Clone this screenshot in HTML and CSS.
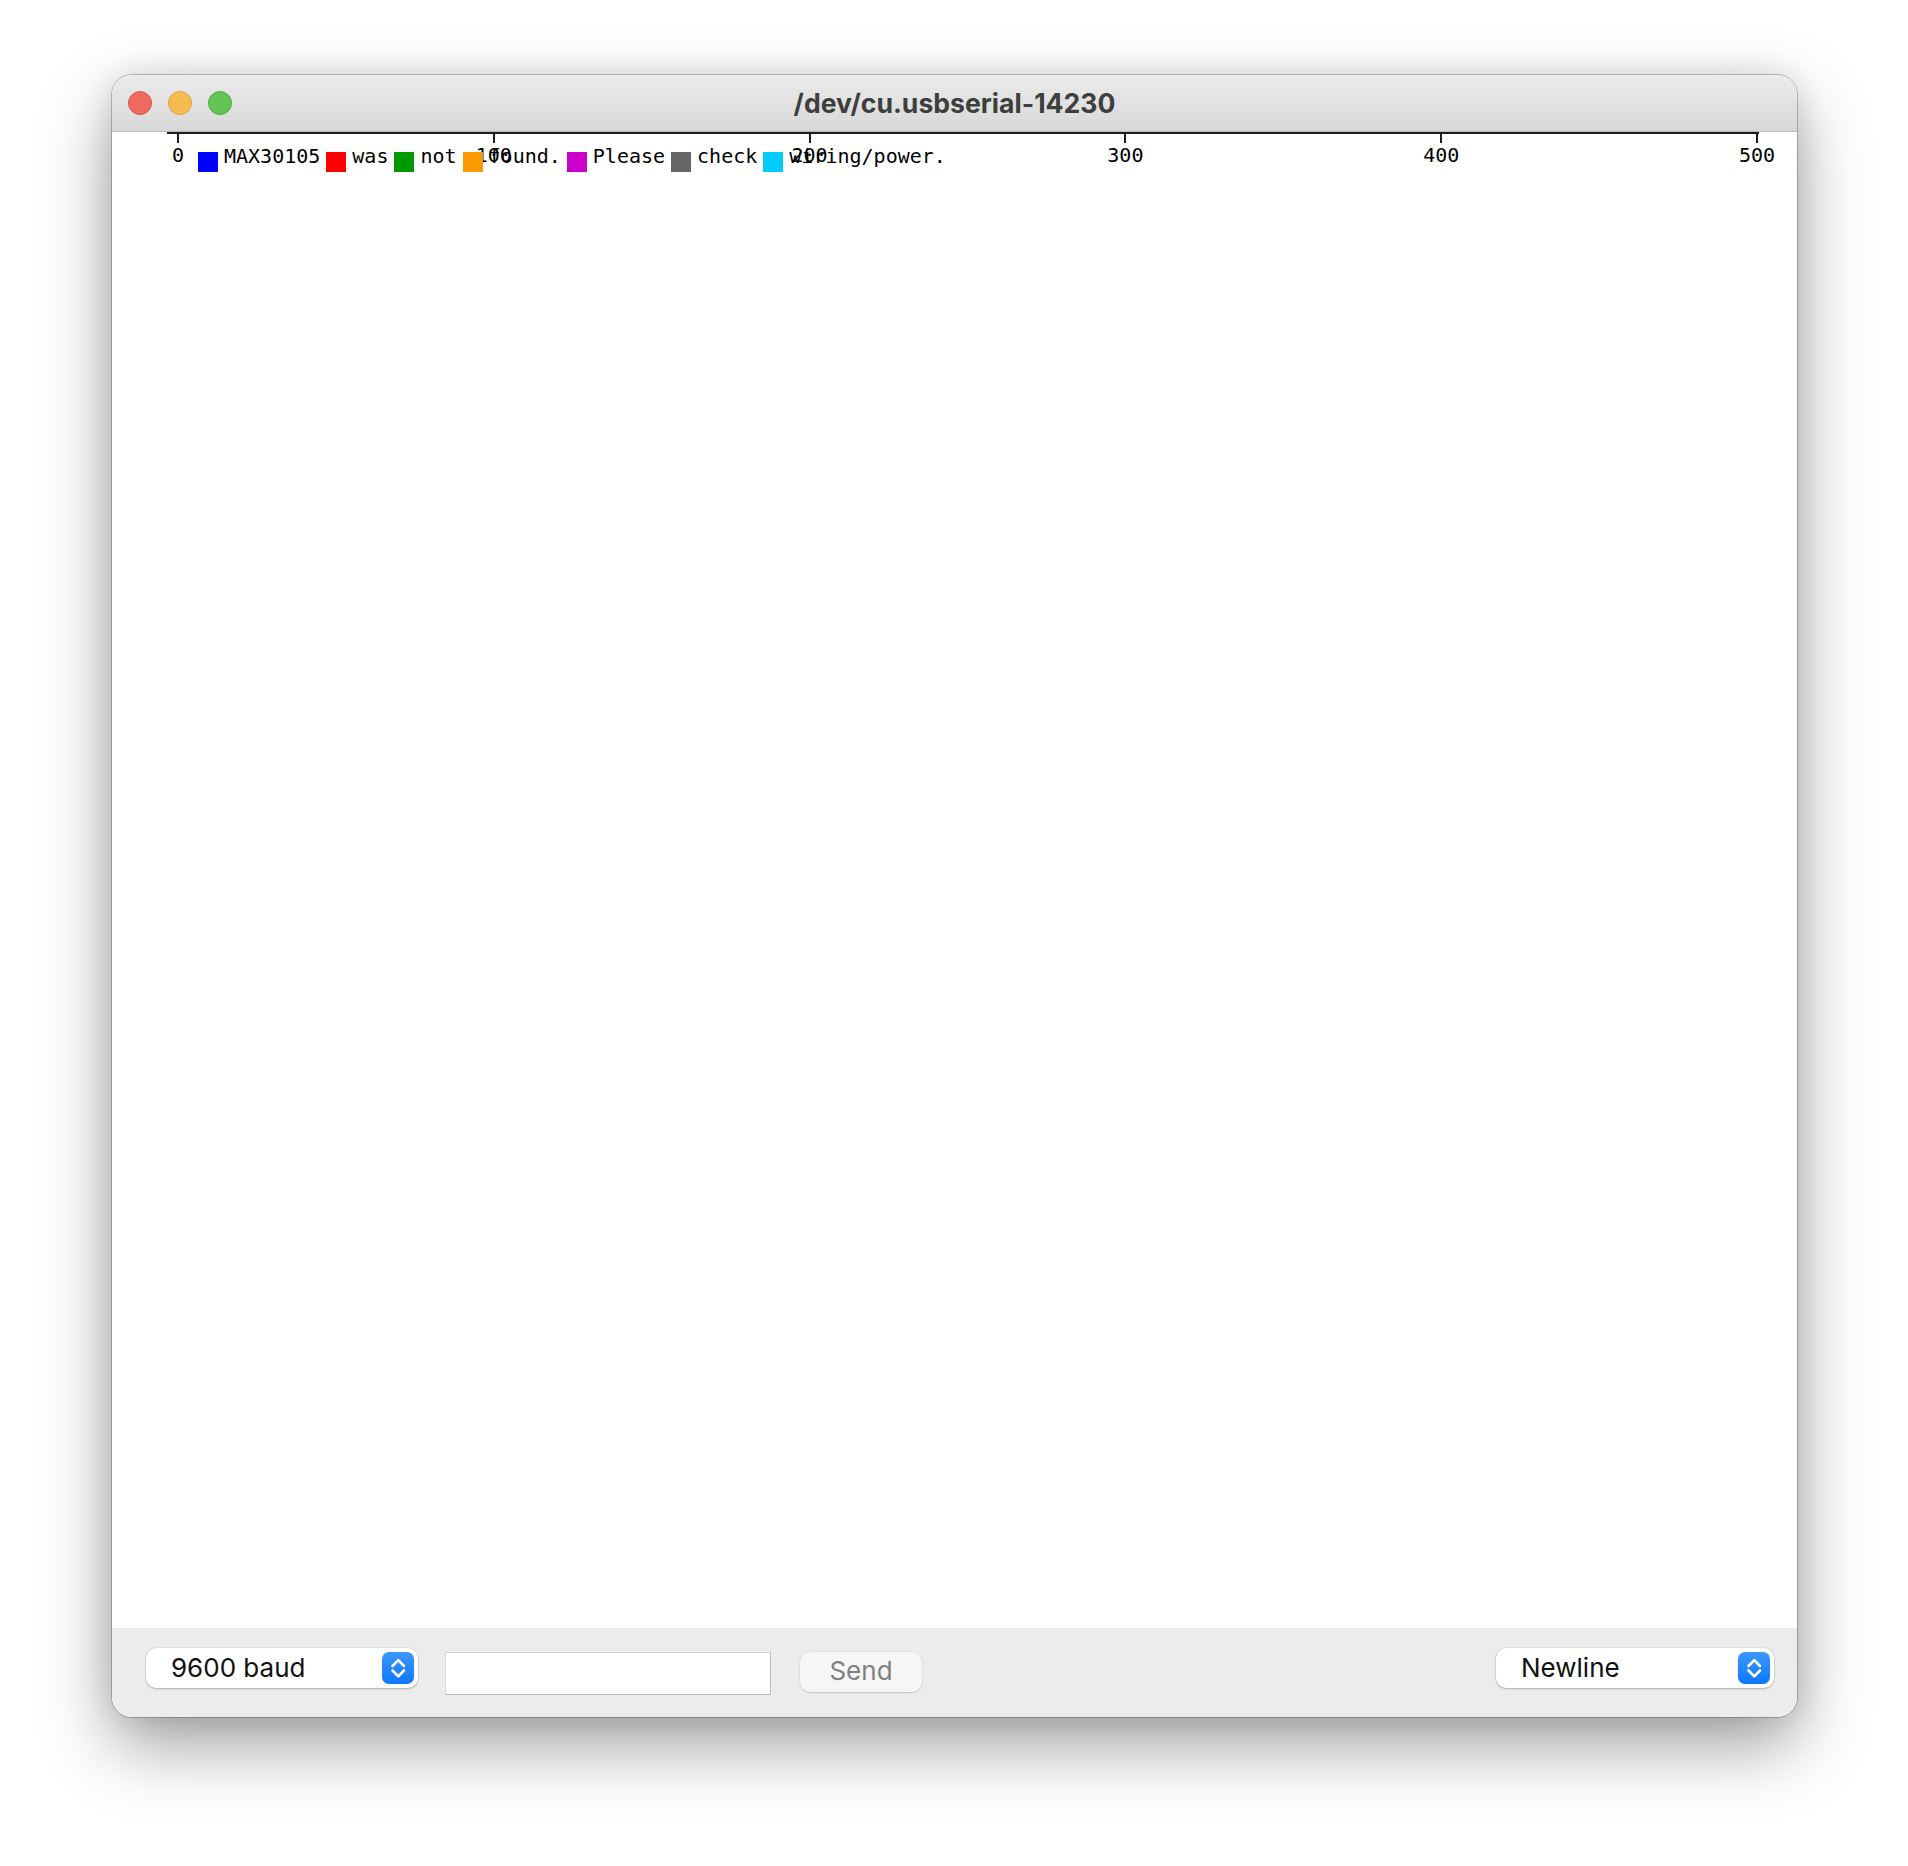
FILE: index.html
```html
<!DOCTYPE html>
<html lang="en">
<head>
<meta charset="utf-8">
<title>/dev/cu.usbserial-14230</title>
<link rel="stylesheet" href="styles.css">
</head>
<body>
<div class="window">
  <div class="titlebar">
    <div class="lights">
      <span class="light red"></span>
      <span class="light yellow"></span>
      <span class="light green"></span>
    </div>
    <div class="title">/dev/cu.usbserial-14230</div>
    <div class="spacer"></div>
  </div>
  <div class="plot">
    <div class="axis"></div>
    <div class="tick" style="left:66px"><span>0</span></div>
    <div class="tick" style="left:381.8px"><span>100</span></div>
    <div class="tick" style="left:697.6px"><span>200</span></div>
    <div class="tick" style="left:1013.4px"><span>300</span></div>
    <div class="tick" style="left:1329.2px"><span>400</span></div>
    <div class="tick" style="left:1645px"><span>500</span></div>
    <div class="legend">
      <span class="sw c1"></span><span class="lt">MAX30105</span>
      <span class="sw c2"></span><span class="lt">was</span>
      <span class="sw c3"></span><span class="lt">not</span>
      <span class="sw c4"></span><span class="lt">found.</span>
      <span class="sw c5"></span><span class="lt">Please</span>
      <span class="sw c6"></span><span class="lt">check</span>
      <span class="sw c7"></span><span class="lt">wiring/power.</span>
    </div>
  </div>
  <div class="bottombar">
    <div class="select baud">
      <span class="sel-text">9600 baud</span>
      <span class="stepper"><svg width="32" height="32" viewBox="0 0 32 32"><path d="M10.5 14 L16.3 8.2 L22 14" /><path d="M10.5 18.5 L16.3 24.3 L22 18.5" /></svg></span>
    </div>
    <div class="input"></div>
    <div class="send">Send</div>
    <div class="grow"></div>
    <div class="select newline">
      <span class="sel-text">Newline</span>
      <span class="stepper"><svg width="32" height="32" viewBox="0 0 32 32"><path d="M10.5 14 L16.3 8.2 L22 14" /><path d="M10.5 18.5 L16.3 24.3 L22 18.5" /></svg></span>
    </div>
  </div>
</div>
</body>
</html>
```
FILE: styles.css
```css
html, body {
  margin: 0;
  padding: 0;
  background: #ffffff;
}
body {
  width: 1908px;
  height: 1866px;
  overflow: hidden;
  font-family: Inter, "Liberation Sans", sans-serif;
}
.window {
  margin: 75px 0 0 112px;
  width: 1685px;
  height: 1642px;
  border-radius: 20px;
  overflow: hidden;
  display: flex;
  flex-direction: column;
  background: #ffffff;
  box-shadow: 0 0 0 1px rgba(0,0,0,0.22), 0 28px 70px rgba(0,0,0,0.38), 0 0 30px rgba(0,0,0,0.10);
}
.titlebar {
  height: 56px;
  flex: none;
  border-bottom: 1px solid #b9b9b9;
  background: linear-gradient(#ebebeb, #d8d8d8);
  display: grid;
  grid-template-columns: 1fr auto 1fr;
  align-items: center;
}
.lights {
  display: flex;
  gap: 16px;
  padding-left: 16px;
}
.light {
  width: 24px;
  height: 24px;
  border-radius: 50%;
  box-sizing: border-box;
}
.red { background: #ee6a5f; border: 1px solid #d9534a; }
.yellow { background: #f5bd4f; border: 1px solid #dba33a; }
.green { background: #61c455; border: 1px solid #4fab43; }
.title {
  font-weight: 700;
  font-size: 26.6px;
  color: #3e3e3e;
  padding-bottom: 1px;
}
.plot {
  flex: 1;
  position: relative;
  background: #ffffff;
}
.axis {
  position: absolute;
  left: 55px;
  top: 0;
  width: 1592px;
  height: 2px;
  background: #1e1e1e;
}
.tick {
  position: absolute;
  top: 0;
  width: 2px;
  height: 11px;
  margin-left: -1px;
  background: #1e1e1e;
}
.tick span {
  position: absolute;
  top: 13px;
  left: 1px;
  transform: translateX(-50%);
  font-family: "DejaVu Sans Mono", "Liberation Mono", monospace;
  font-size: 20px;
  line-height: 20px;
  color: #000;
  white-space: nowrap;
}
.legend {
  position: absolute;
  left: 86px;
  top: 14px;
  display: flex;
  align-items: flex-start;
  gap: 6px;
  font-family: "DejaVu Sans Mono", "Liberation Mono", monospace;
  font-size: 20px;
  line-height: 20px;
  color: #000;
  white-space: nowrap;
}
.sw {
  width: 20px;
  height: 20px;
  margin-top: 6px;
  flex: none;
}
.c1 { background: #0000ff; }
.c2 { background: #ff0000; }
.c3 { background: #009900; }
.c4 { background: #ff9900; }
.c5 { background: #cc00cc; }
.c6 { background: #666666; }
.c7 { background: #00ccff; }
.bottombar {
  height: 89px;
  flex: none;
  background: #ececec;
  display: flex;
  align-items: flex-start;
  box-sizing: border-box;
  padding: 20px 23px 0 34px;
}
.select {
  position: relative;
  height: 40px;
  background: #ffffff;
  border-radius: 10px;
  box-shadow: 0 1px 2px rgba(0,0,0,0.22), 0 0 0 0.5px rgba(0,0,0,0.10);
  box-sizing: border-box;
  display: flex;
  align-items: center;
  padding-bottom: 2px;
}
.baud { width: 272px; }
.newline { width: 278px; }
.sel-text {
  padding-left: 25px;
  font-size: 26px;
  color: #111;
}
.stepper {
  position: absolute;
  right: 4px;
  top: 4px;
  width: 32px;
  height: 32px;
  border-radius: 7px;
  background: linear-gradient(#3d97ff, #0c78fe);
}
.stepper svg {
  display: block;
}
.stepper path {
  fill: none;
  stroke: #ffffff;
  stroke-width: 2.6;
  stroke-linecap: round;
  stroke-linejoin: round;
}
.input {
  width: 326px;
  height: 43px;
  margin-left: 27px;
  margin-top: 4px;
  box-sizing: border-box;
  background: #ffffff;
  border: 1px solid;
  border-color: #d2d2d2 #bdbdbd #bdbdbd #dadada;
}
.send {
  width: 122px;
  height: 40px;
  margin-left: 29px;
  margin-top: 4px;
  border-radius: 10px;
  background: #f6f6f6;
  box-shadow: 0 1px 1.5px rgba(0,0,0,0.14), 0 0 0 0.5px rgba(0,0,0,0.06);
  color: #808080;
  font-size: 26px;
  line-height: 37px;
  text-align: center;
}
.grow { flex: 1; }
```
